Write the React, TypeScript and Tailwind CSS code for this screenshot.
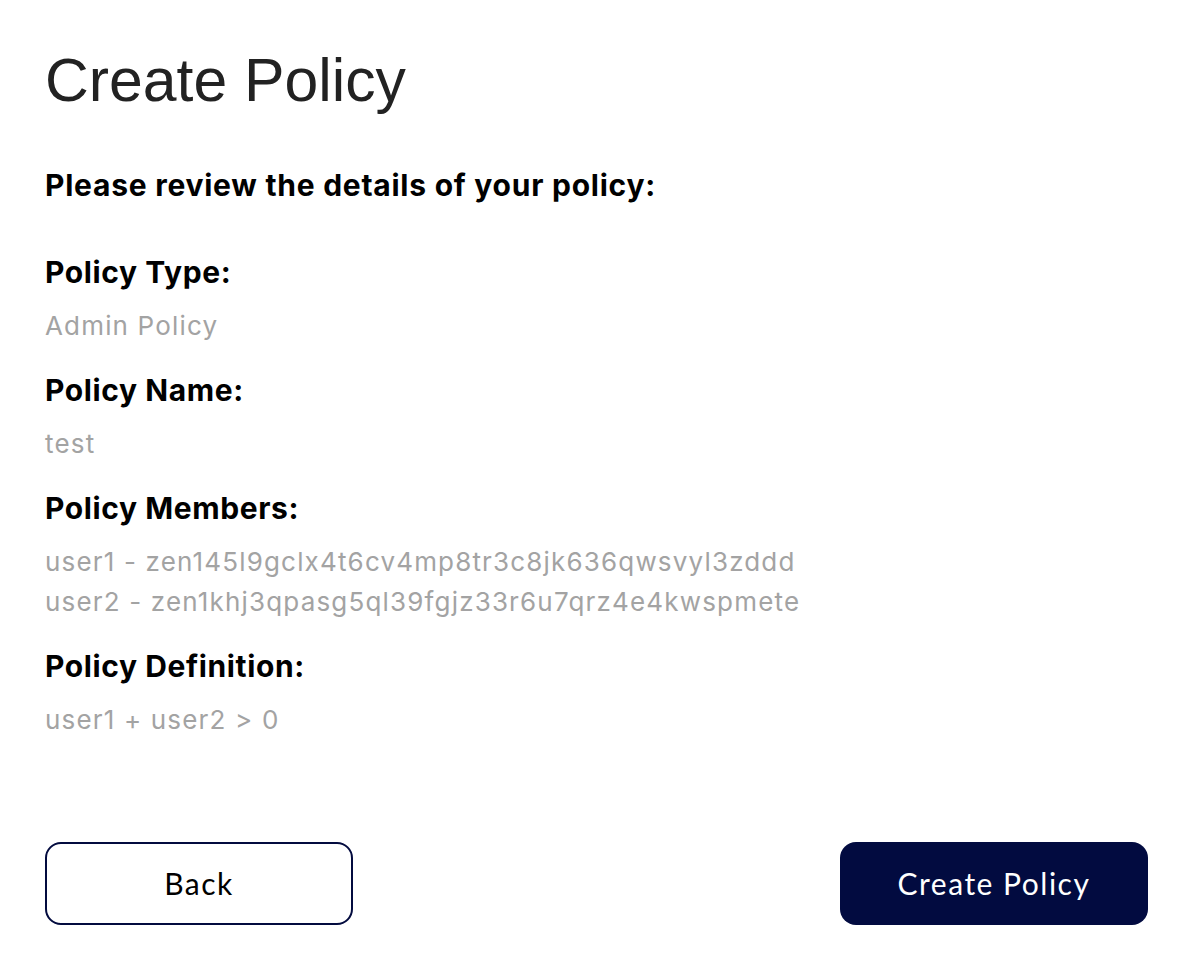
import React from "react";

const sections = [
  { title: "Policy Type:", values: ["Admin Policy"] },
  { title: "Policy Name:", values: ["test"] },
  {
    title: "Policy Members:",
    values: [
      "user1 - zen145l9gclx4t6cv4mp8tr3c8jk636qwsvyl3zddd",
      "user2 - zen1khj3qpasg5ql39fgjz33r6u7qrz4e4kwspmete",
    ],
  },
  { title: "Policy Definition:", values: ["user1 + user2 > 0"] },
];

const App = () => {
  return (
    <div className="min-h-screen bg-white pl-[45px] pr-[44px] pt-[50px] pb-[38px] flex flex-col">
      <h1 className="font-['Liberation_Sans',Arial,sans-serif] text-[60.7px] leading-[60px] text-[#222222]">
        Create Policy
      </h1>
      <div className="mt-[57px] font-['Inter',sans-serif]">
        <h2 className="text-[30px] leading-[36px] font-bold tracking-[0.025em] text-black">
          Please review the details of your policy:
        </h2>
        <div className="mt-[51px] flex flex-col gap-[26px]">
          {sections.map((s) => (
            <div key={s.title} className="flex flex-col">
              <h3 className="text-[30px] leading-[36px] font-bold tracking-[0.02em] text-black">
                {s.title}
              </h3>
              <div className="mt-[16px] flex flex-col">
                {s.values.map((v) => (
                  <p key={v} className="text-[26px] leading-[40px] tracking-[0.045em] text-[#a3a3a3]">
                    {v}
                  </p>
                ))}
              </div>
            </div>
          ))}
        </div>
      </div>
      <div className="mt-[102px] flex justify-between font-['Lato',sans-serif] text-[30px] tracking-[0.05em]">
        <button className="w-[308px] h-[83px] rounded-[16px] border-2 border-[#030b3f] bg-white text-black">
          Back
        </button>
        <button className="w-[308px] h-[83px] rounded-[16px] bg-[#020b40] text-white">
          Create Policy
        </button>
      </div>
    </div>
  );
};

export default App;
